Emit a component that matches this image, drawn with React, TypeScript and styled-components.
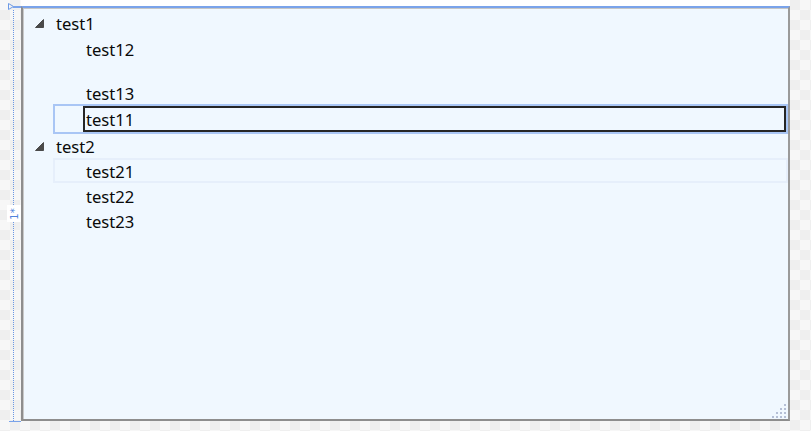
import React from 'react'
import styled, { createGlobalStyle } from 'styled-components'

const GlobalStyle = createGlobalStyle`
html, body {
  margin: 0;
  padding: 0;
}
body {
  width: 811px;
  height: 431px;
  overflow: hidden;
  font-family: "Noto Sans", "Open Sans", sans-serif;
}
`

type State = 'selected' | 'hover' | undefined

interface Item {
  text: string
  h: number
  state?: State
  children?: Item[]
}

const tree: Item[] = [
  {
    text: 'test1',
    h: 26,
    children: [
      { text: 'test12', h: 25 },
      { text: '', h: 20 },
      { text: 'test13', h: 23 },
      { text: 'test11', h: 30, state: 'selected' },
    ],
  },
  {
    text: 'test2',
    h: 24,
    children: [
      { text: 'test21', h: 25, state: 'hover' },
      { text: 'test22', h: 25 },
      { text: 'test23', h: 25 },
    ],
  },
]

const borderFor = (s: State) =>
  s === 'selected' ? '#a9c6f5' : s === 'hover' ? '#e6effb' : 'transparent'

const App = () => {
  return (
    <>
      <GlobalStyle />
      <Stage>
        <Rail>
          <Marker width="21" height="10" viewBox="0 0 21 10">
            <polygon points="8.5,3.5 13.5,6.5 8.5,9.5" fill="none" stroke="#6d9ae6" strokeWidth="1" />
            <line x1="13" y1="7" x2="21" y2="7" stroke="#7aa3ea" strokeWidth="2" />
          </Marker>
          <Guide />
          <Tick />
          <Badge>
            <BadgeText>1*</BadgeText>
          </Badge>
        </Rail>
        <Column>
          <TopStrip />
          <Window>
            <Tree>
              {tree.map((item) => (
                <React.Fragment key={item.text}>
                  <HeaderRow $h={item.h}>
                    <Expander>
                      <svg width="9" height="9" viewBox="0 0 9 9">
                        <polygon points="8.5,0.5 8.5,8.5 0.5,8.5" fill="#4a4a4a" stroke="#4a4a4a" strokeWidth="1" strokeLinejoin="round" />
                      </svg>
                    </Expander>
                    <Label>{item.text}</Label>
                  </HeaderRow>
                  {item.children?.map((child, i) => (
                    <ChildRow key={i} $h={child.h} $state={child.state}>
                      <ChildLabel $editing={child.state === 'selected'}>{child.text}</ChildLabel>
                    </ChildRow>
                  ))}
                </React.Fragment>
              ))}
            </Tree>
            <Grip width="16" height="16" viewBox="0 0 16 16">
              {[0, 1, 2, 3].map((r) =>
                [0, 1, 2, 3]
                  .filter((c) => c >= 3 - r)
                  .map((c) => (
                    <rect key={`${r}-${c}`} x={1 + c * 4} y={1 + r * 4} width="2" height="2" fill="#b4bfd6" />
                  ))
              )}
            </Grip>
          </Window>
        </Column>
      </Stage>
    </>
  )
}

export default App

const Stage = styled.div`
position: relative;
display: flex;
width: 811px;
height: 431px;
padding-left: 21px;
box-sizing: border-box;
background: conic-gradient(#efefef 25%, #f7f7f7 0 50%, #efefef 0 75%, #f7f7f7 0) 0 0 / 20px 20px;
`
const Rail = styled.div`
position: absolute;
left: 0;
top: 0;
width: 21px;
height: 431px;
display: flex;
flex-direction: column;
`
const Marker = styled.svg`
display: block;
flex: none;
`
const Guide = styled.div`
margin-left: 13px;
height: 411px;
border-left: 1px dotted #6a97e4;
`
const Tick = styled.div`
margin-left: 9px;
width: 12px;
height: 1px;
background: #7aa3ea;
`
const Badge = styled.div`
position: absolute;
left: 7px;
top: 205px;
width: 15px;
height: 17px;
background: #ffffff;
display: flex;
align-items: center;
justify-content: center;
`
const BadgeText = styled.span`
display: block;
transform: rotate(-90deg);
font-family: "DejaVu Sans", sans-serif;
font-size: 10px;
line-height: 10px;
color: #4f84dc;
`
const Column = styled.div`
display: flex;
flex-direction: column;
width: 769px;
`
const TopStrip = styled.div`
height: 6px;
background: #ffffff;
`
const Window = styled.div`
position: relative;
height: 415px;
box-sizing: border-box;
background: #f0f8ff;
border-top: 2px solid #7aa3ea;
border-left: 2px solid #8e8e8e;
border-right: 2px solid #9a9a9a;
border-bottom: 2px solid #8e8e8e;
box-shadow: inset 0 1px 0 #c6c6c6, inset 1px 0 0 #c9c9c9;
`
const Tree = styled.div`
display: flex;
flex-direction: column;
padding-top: 2px;
`
const HeaderRow = styled.div<{ $h: number }>`
display: flex;
align-items: center;
height: ${(p) => p.$h}px;
margin-left: 11px;
`
const Expander = styled.div`
width: 22px;
display: flex;
align-items: center;
padding-left: 1px;
box-sizing: border-box;
svg {
  display: block;
}
`
const Label = styled.div`
font-size: 16.6px;
line-height: 25px;
padding-top: 1px;
color: #0a0a0a;
white-space: pre;
`
const ChildRow = styled.div<{ $h: number; $state?: State }>`
display: flex;
align-items: center;
height: ${(p) => p.$h}px;
margin-left: 30px;
padding-left: 28px;
box-sizing: border-box;
border: 2px solid ${(p) => borderFor(p.$state)};
`
const ChildLabel = styled.div<{ $editing: boolean }>`
flex: 1;
height: ${(p) => (p.$editing ? '26px' : 'auto')};
box-sizing: border-box;
border: 2px solid ${(p) => (p.$editing ? '#262626' : 'transparent')};
border-right-width: ${(p) => (p.$editing ? '2px' : '0')};
padding: 1px 0 0 1px;
font-size: 16.6px;
line-height: 21px;
color: #0a0a0a;
white-space: pre;
min-height: 1px;
`
const Grip = styled.svg`
position: absolute;
right: 1px;
bottom: 0px;
display: block;
`
